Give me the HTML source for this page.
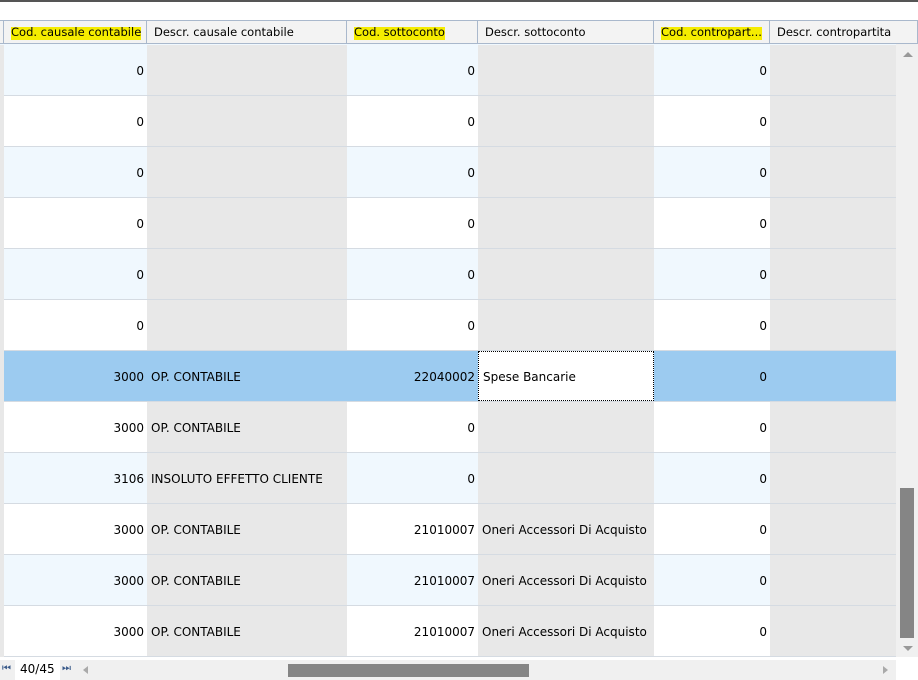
<!DOCTYPE html>
<html><head><style>
*{margin:0;padding:0;box-sizing:border-box}
body{width:918px;height:680px;overflow:hidden;background:#fff;font-family:"DejaVu Sans","Liberation Sans",sans-serif;font-size:12px;color:#000;position:relative}
.a{position:absolute}
.h{position:absolute;top:20px;height:24px;background:#f3f3f3;border-right:1px solid #a9b8cc;border-top:1px solid #a9b8cc;border-bottom:1px solid #a9b8cc;line-height:22px;padding-left:7px;white-space:nowrap;overflow:hidden;font-size:11.5px}
.hl{background:linear-gradient(#f3f3f3 0,#f3f3f3 6px,#f5ec00 6px,#f5ec00 19px,#f3f3f3 19px);display:inline-block;line-height:22px;border-radius:3px}
.row{position:absolute;left:4px;width:892px;height:51px;border-bottom:1px solid #d5dbe2}
.c{position:absolute;top:0;height:50px;line-height:52px;white-space:nowrap}
.g{background:#e8e8e8}
.r{text-align:right;padding-right:3px}
.l{padding-left:4px}
</style></head><body>
<div class="a" style="left:0;top:0;width:918px;height:2px;background:#555"></div>
<div class="a" style="left:0;top:20px;width:4px;height:24px;background:#f3f3f3;border-top:1px solid #a9b8cc;border-bottom:1px solid #a9b8cc;border-right:1px solid #a9b8cc"></div>
<div class="h" style="left:4px;width:143px"><span class="hl">Cod. causale contabile</span></div>
<div class="h" style="left:147px;width:200px">Descr. causale contabile</div>
<div class="h" style="left:347px;width:131px"><span class="hl">Cod. sottoconto</span></div>
<div class="h" style="left:478px;width:176px">Descr. sottoconto</div>
<div class="h" style="left:654px;width:116px"><span class="hl">Cod. contropart...</span></div>
<div class="h" style="left:770px;width:148px">Descr. contropartita</div>
<div class="a" style="left:0;top:44px;width:4px;height:616px;background:#e8e8e8"></div>
<div id="rows"></div>
<script>
var d=[["0","","0",""],["0","","0",""],["0","","0",""],["0","","0",""],["0","","0",""],["0","","0",""],["3000","OP. CONTABILE","22040002","Spese Bancarie"],["3000","OP. CONTABILE","0",""],["3106","INSOLUTO EFFETTO CLIENTE","0",""],["3000","OP. CONTABILE","21010007","Oneri Accessori Di Acquisto"],["3000","OP. CONTABILE","21010007","Oneri Accessori Di Acquisto"],["3000","OP. CONTABILE","21010007","Oneri Accessori Di Acquisto"]];
var h="";
d.forEach(function(r,i){
 var top=45+i*51, sel=i==6, bg=sel?"#9ccbf0":(i%2==0?"#f0f8fe":"#fff");
 var gb=sel?"#9ccbf0":"#e8e8e8";
 h+='<div class="row" style="top:'+top+'px;background:'+bg+'">'+
 '<div class="c r" style="left:0;width:143px">'+r[0]+'</div>'+
 '<div class="c l" style="left:143px;width:200px;background:'+gb+'">'+r[1]+'</div>'+
 '<div class="c r" style="left:343px;width:131px">'+r[2]+'</div>'+
 (sel?'<div class="c l" style="left:474px;width:176px;background:#fff;border:1px dotted #000;line-height:50px">'+r[3]+'</div>'
     :'<div class="c l" style="left:474px;width:176px;background:#e8e8e8">'+r[3]+'</div>')+
 '<div class="c r" style="left:650px;width:116px">0</div>'+
 '<div class="c" style="left:766px;width:126px;background:'+gb+'"></div></div>';
});
document.getElementById("rows").innerHTML=h;
</script>
<div class="a" style="left:0;top:44px;width:896px;height:1px;background:#f0f8fe"></div>
<div class="a" style="left:896px;top:44px;width:22px;height:616px;background:#f0f0f0"></div>
<div class="a" style="left:903px;top:52px;width:0;height:0;border-left:5px solid transparent;border-right:5px solid transparent;border-bottom:5px solid #999"></div>
<div class="a" style="left:900px;top:488px;width:14px;height:150px;background:#858585"></div>
<div class="a" style="left:903px;top:646px;width:0;height:0;border-left:5px solid transparent;border-right:5px solid transparent;border-top:5px solid #999"></div>
<div class="a" style="left:0;top:657px;width:918px;height:3px;background:#fff"></div>
<div class="a" style="left:0;top:660px;width:896px;height:20px;background:#f0f0f0"></div>
<div class="a" style="left:15px;top:660px;width:45px;height:20px;background:#fff"></div>
<div class="a" style="left:2px;top:663px;font-size:10px;color:#3a5a8a">⏮</div>
<div class="a" style="left:20px;top:662px;font-size:12px">40/45</div>
<div class="a" style="left:62px;top:663px;font-size:10px;color:#3a5a8a">⏭</div>
<div class="a" style="left:83px;top:666px;width:0;height:0;border-top:4px solid transparent;border-bottom:4px solid transparent;border-right:5px solid #aaa"></div>
<div class="a" style="left:288px;top:664px;width:241px;height:13px;background:#858585"></div>
<div class="a" style="left:883px;top:666px;width:0;height:0;border-top:4px solid transparent;border-bottom:4px solid transparent;border-left:5px solid #aaa"></div>
</body></html>
